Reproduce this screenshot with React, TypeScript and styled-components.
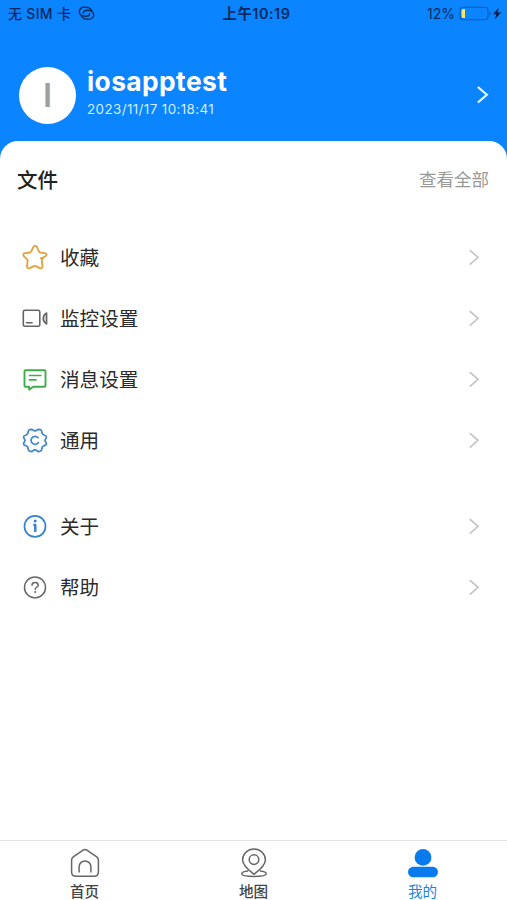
import React from 'react';
import styled, { createGlobalStyle } from 'styled-components';

const GlobalStyle = createGlobalStyle`
  * { box-sizing: border-box; }
  body { margin: 0; background: #fff; font-family: Inter, "Noto Sans CJK SC", sans-serif; }
  svg { display: block; flex: none; overflow: visible; }
`;

const Screen = styled.div`
  display: flex;
  flex-direction: column;
  width: 100%;
  height: 900px;
  overflow: hidden;
  background: #0a84ff;
`;

const StatusBar = styled.header`
  display: grid;
  grid-template-columns: 1fr auto 1fr;
  align-items: center;
  height: 28px;
  padding: 0 5px 0 8px;
  font-size: 14px;
  line-height: 20px;
  color: #06295c;
  white-space: nowrap;
`;

const StatusGroup = styled.div<{ $end?: boolean }>`
  display: flex;
  align-items: center;
  gap: ${(p) => (p.$end ? 4 : 8)}px;
  justify-content: ${(p) => (p.$end ? 'flex-end' : 'flex-start')};
`;

const Carrier = styled.span`
  font-size: 14px;
  font-weight: 500;
  letter-spacing: 0.3px;
`;

const Clock = styled.span`
  padding-left: 3px;
  font-size: 14.3px;
  font-weight: 600;
  letter-spacing: 0.6px;
`;

const Profile = styled.section`
  display: flex;
  align-items: center;
  height: 113px;
  padding: 21px 19px 0 19px;
  color: #fff;
`;

const Avatar = styled.div`
  display: flex;
  align-items: center;
  justify-content: center;
  width: 57px;
  height: 57px;
  border-radius: 50%;
  background: #fff;
  color: #a0a0a0;
  font-size: 33px;
  font-weight: 600;
  line-height: 1;
`;

const Identity = styled.div`
  flex: 1;
  margin-left: 11px;
  padding-bottom: 8px;
`;

const UserName = styled.div`
  font-size: 26.4px;
  line-height: 32px;
  font-weight: 700;
  letter-spacing: 0.4px;
`;

const LoginTime = styled.div`
  margin-top: 4px;
  font-size: 13.4px;
  line-height: 16px;
  letter-spacing: 0.4px;
  color: #d2f0ff;
`;

const Sheet = styled.main`
  display: flex;
  flex: 1;
  flex-direction: column;
  background: #fff;
  border-radius: 18px 18px 0 0;
`;

const FilesHeader = styled.div`
  display: flex;
  align-items: center;
  justify-content: space-between;
  height: 78px;
  padding: 0 18px 0 17px;
`;

const FilesTitle = styled.h1`
  margin: 0;
  padding-top: 1px;
  font-size: 20.5px;
  line-height: 28px;
  font-weight: 500;
  color: #222;
`;

const ViewAll = styled.span`
  font-size: 17.5px;
  line-height: 24px;
  color: #999;
`;

const MenuGroup = styled.nav<{ $top: number }>`
  margin-top: ${(p) => p.$top}px;
`;

const MenuRow = styled.div`
  display: flex;
  align-items: center;
  height: 61px;
  padding: 0 28px 0 21px;
`;

const MenuLabel = styled.span`
  flex: 1;
  margin-left: 11px;
  font-size: 19.6px;
  line-height: 28px;
  color: #2b2b2b;
`;

const TabBar = styled.footer`
  display: grid;
  grid-template-columns: repeat(3, 1fr);
  height: 60px;
  margin-top: auto;
  border-top: 1px solid #e4e4e4;
`;

const Tab = styled.div<{ $active?: boolean }>`
  display: flex;
  flex-direction: column;
  align-items: center;
  padding-top: 6px;
  font-size: 14.6px;
  line-height: 20px;
  font-weight: ${(p) => (p.$active ? 400 : 500)};
  color: ${(p) => (p.$active ? '#1c86e0' : '#444')};
`;

const TabLabel = styled.span`
  margin-top: 3px;
`;

const Chevron = ({ light }: { light?: boolean }) => (
  <svg width={light ? 11 : 10} height={light ? 17 : 16} viewBox="0 0.7 10 17" preserveAspectRatio="none"
    fill="none" stroke={light ? '#e5fbff' : '#c4c4c4'} strokeWidth={light ? 2 : 1.7}>
    <path d="M0.8 0.8 9 8.5 0.8 16.2" />
  </svg>
);

const LinkIcon = () => (
  <svg width="16" height="14" viewBox="0.5 0.8 16 14" fill="none" stroke="currentColor" strokeWidth="1.4" strokeLinecap="round">
    <path d="M13.200 4.200C12 1.900 9.300.9 6.300.9 3 .9.800 2.800.800 5.300c0 2.900 2.500 4.700 5.700 4.700 2.800 0 4.700-1.100 4.700-2.800" />
    <path d="M2.800 9.800c1.200 2.300 3.900 3.300 6.900 3.300 3.300 0 5.500-1.900 5.500-4.400 0-2.900-2.500-4.700-5.700-4.700-2.800 0-4.700 1.100-4.700 2.800" />
  </svg>
);

const BatteryIcon = () => (
  <svg width="43" height="14" viewBox="0 0.500 43 14">
    <rect x="1" y=".8" width="28" height="12.400" rx="3" fill="none" stroke="#0c5cae" strokeWidth="1.100" />
    <path d="M4.200 2.500H6v9H4.200A1.700 1.700 0 0 1 2.500 9.800V4.200a1.700 1.700 0 0 1 1.700-1.700z" fill="#f4e768" />
    <path d="M30.500 5c1.500.3 1.500 3.700 0 4z" fill="#0c5cae" />
    <path d="M39.800 1.300 34 7.800h3.300l-1.400 5 6.200-6.700h-3.700z" fill="#041c45" />
  </svg>
);

type IconProps = { color: string; width?: number; children: React.ReactNode };

const RowIcon = ({ color, width = 1.8, children }: IconProps) => (
  <svg width="28" height="28" viewBox="0 0.6 28 28" fill="none" stroke={color} strokeWidth={width}
    strokeLinecap="round" strokeLinejoin="round">
    {children}
  </svg>
);

const StarIcon = () => (
  <RowIcon color="#e3a13a">
    <path d="M19.800 14.800c1.600 0 3.200-.8 5-2.300 1.200-1.100.7-2.300-.9-2.700l-4.700-.6c-.7-.1-1-.5-1.300-1.100l-2-4.700c-.8-1.600-2.700-1.600-3.500 0L10.300 8c-.3.700-.7 1-1.400 1.100l-4.700.7c-1.900.3-2.500 1.700-1.200 3.100l3.100 3.100c.5.500.6 1 .5 1.700l-.6 5c-.2 1.900 1.100 2.800 2.800 2l4-2c.7-.3 1.300-.3 2 0l3.900 2c1.700.8 3.100-.2 2.800-2l-.7-5.300c-.1-1 .3-1.400 1-2.300" />
  </RowIcon>
);

const CameraIcon = () => (
  <RowIcon color="#666" width={1.600}>
    <rect x="2.300" y="5.900" width="16.500" height="16" rx="1.600" />
    <path d="M5.500 18.300h5.500" />
    <path d="M25.600 8.600v11c-2.300-1.500-3.400-3.200-3.400-5.500s1.100-4 3.400-5.500z" fill="#ddd" />
  </RowIcon>
);

const MessageIcon = () => (
  <RowIcon color="#3fae49" width={1.900}>
    <path d="M4.500 4.900h19a1 1 0 0 1 1 1V20.300a1 1 0 0 1-1 1H12.300l-4.200 2.900v-2.900H4.500a1 1 0 0 1-1-1V5.900a1 1 0 0 1 1-1z" />
    <path d="M8.500 10.100h11.300M8.500 14.500h6.500" strokeWidth="1.700" />
  </RowIcon>
);

const GearIcon = () => (
  <RowIcon color="#4387cf">
    <path d="M8.700 3.300 10.700 2.900C11.700 2.900 12 4.500 14 4.500s2.300-1.600 3.300-1.600l2 .4c2.200.6 1.200 3 2.200 4.400s3 .9 3.700 2.200c1 2-1.200 2.500-1.200 4.100s2.200 2.100 1.200 4.100c-.7 1.300-2.700.8-3.700 2.200s0 3.800-2.200 4.400l-2 .4c-1 0-1.300-1.600-3.300-1.600s-2.300 1.600-3.300 1.600l-2-.4c-2.200-.6-1.200-3-2.200-4.400s-3-.9-3.700-2.200c-1-2 1.200-2.500 1.200-4.100s-2.200-2.100-1.200-4.100c.7-1.300 2.700-.8 3.700-2.200s0-3.800 2.200-4.400z" />
    <path d="M17 11.200a4 4 0 1 0 .3 5.100" />
  </RowIcon>
);

const InfoIcon = () => (
  <RowIcon color="#3683cc" width={1.700}>
    <circle cx="14" cy="14" r="10.500" />
    <path d="M12.300 12.600h2v7" strokeWidth="2.400" strokeLinecap="butt" />
    <circle cx="14.200" cy="8.600" r="1.500" fill="#3683cc" stroke="none" />
  </RowIcon>
);

const HelpIcon = () => (
  <RowIcon color="#686868" width={1.500}>
    <circle cx="14" cy="14" r="10.500" />
    <path d="M11 11.900c0-1.700 1.300-2.700 3.100-2.700s3.100 1 3.100 2.600c0 2-3 2.100-3 4.100" />
    <circle cx="14.200" cy="18.700" r="1" fill="#686868" stroke="none" />
  </RowIcon>
);

const HomeIcon = () => (
  <svg width="30" height="32" viewBox="0 0 30 32" fill="none" stroke="#666" strokeWidth="1.500" strokeLinecap="round" strokeLinejoin="round">
    <path d="M13.100 3.200 3.300 9.800C2.200 10.600 1.600 11.600 1.600 13v12c0 2.800 1.500 4.300 4.300 4.300h18.200c2.800 0 4.300-1.500 4.300-4.300V13c0-1.400-.6-2.400-1.700-3.200l-9.800-6.600c-1.200-.8-2.600-.8-3.800 0z" />
    <path d="M9.100 25.100v-5.300a5.900 5.900 0 0 1 11.800 0v5.300" />
  </svg>
);

const MapIcon = () => (
  <svg width="30" height="32" viewBox="0 0 30 32" fill="none" stroke="#666" strokeWidth="1.500" strokeLinejoin="round">
    <path d="M15 27.300C10.200 23.500 3.600 18.500 3.600 12.900a11.400 10.900 0 0 1 22.800 0c0 5.600-6.600 10.600-11.400 14.400z" />
    <circle cx="15" cy="12.600" r="4.800" />
    <path d="M9.200 24.100C5.300 24.500 2.700 25.500 2.700 26.800c0 1.600 5 2.700 12.300 2.700s12.300-1.100 12.300-2.700c0-1.300-2.600-2.300-6.500-2.700" />
  </svg>
);

const PersonIcon = () => (
  <svg width="30" height="32" viewBox="0 0 30 32" fill="#0a7bef">
    <circle cx="15" cy="10.400" r="8.400" />
    <rect x="0" y="19.800" width="30" height="10.400" rx="5.200" />
  </svg>
);

const mainItems = [
  { label: '收藏', icon: <StarIcon /> },
  { label: '监控设置', icon: <CameraIcon /> },
  { label: '消息设置', icon: <MessageIcon /> },
  { label: '通用', icon: <GearIcon /> },
];

const supportItems = [
  { label: '关于', icon: <InfoIcon /> },
  { label: '帮助', icon: <HelpIcon /> },
];

const Menu = ({ items, top }: { items: typeof mainItems; top: number }) => (
  <MenuGroup $top={top}>
    {items.map((item) => (
      <MenuRow key={item.label}>
        {item.icon}
        <MenuLabel>{item.label}</MenuLabel>
        <Chevron />
      </MenuRow>
    ))}
  </MenuGroup>
);

export default function App() {
  return (
    <>
      <GlobalStyle />
      <Screen>
        <StatusBar>
          <StatusGroup>
            <Carrier>无 SIM 卡</Carrier>
            <LinkIcon />
          </StatusGroup>
          <Clock>上午10:19</Clock>
          <StatusGroup $end>
            <span>12%</span>
            <BatteryIcon />
          </StatusGroup>
        </StatusBar>
        <Profile>
          <Avatar>I</Avatar>
          <Identity>
            <UserName>iosapptest</UserName>
            <LoginTime>2023/11/17 10:18:41</LoginTime>
          </Identity>
          <Chevron light />
        </Profile>
        <Sheet>
          <FilesHeader>
            <FilesTitle>文件</FilesTitle>
            <ViewAll>查看全部</ViewAll>
          </FilesHeader>
          <Menu items={mainItems} top={8} />
          <Menu items={supportItems} top={25} />
          <TabBar>
            <Tab><HomeIcon /><TabLabel>首页</TabLabel></Tab>
            <Tab><MapIcon /><TabLabel>地图</TabLabel></Tab>
            <Tab $active><PersonIcon /><TabLabel>我的</TabLabel></Tab>
          </TabBar>
        </Sheet>
      </Screen>
    </>
  );
}
